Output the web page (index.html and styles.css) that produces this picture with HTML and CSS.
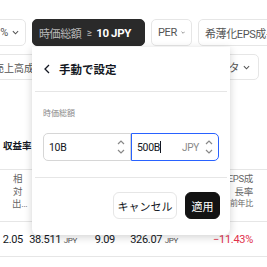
FILE: index.html
```html
<!DOCTYPE html>
<html lang="ja">
<head>
  <meta charset="UTF-8" />
  <meta name="viewport" content="width=device-width, initial-scale=1.0"/>
  <title>スクリーナー</title>
  <link rel="stylesheet" href="styles.css">
</head>
<body>
  <div class="page">
    <div class="filters">
      <div class="filter-row first">
        <div class="chip pct">% <svg class="chev" viewBox="0 0 8 5"><path d="M1 1l3 3 3-3"/></svg></div>
        <div class="chip active">
          <span class="chip-label">時価総額</span>
          <span class="ge">≥</span>
          <b>10 JPY</b>
          <svg class="chev up" viewBox="0 0 8 5"><path d="M1 4l3-3 3 3"/></svg>
        </div>
        <div class="chip per">PER <svg class="chev" viewBox="0 0 8 5"><path d="M1 1l3 3 3-3"/></svg></div>
        <div class="chip">希薄化EPS成長率</div>
      </div>
      <div class="filter-row second">
        <div class="chip sales">売上高成長率</div>
        <div class="chip beta">ベータ <svg class="chev" viewBox="0 0 8 5"><path d="M1 1l3 3 3-3"/></svg></div>
      </div>
    </div>

    <div class="section-title">収益率</div>

    <div class="table">
      <div class="row head">
        <div class="cell c1"><span class="vert">相対出…</span></div>
        <div class="cell c2"></div>
        <div class="cell c3"></div>
        <div class="cell c4"></div>
        <div class="cell c5"><span class="wrap">希薄化EPS成長率</span><small>前年比</small></div>
      </div>
      <div class="row">
        <div class="cell c1">2.05</div>
        <div class="cell c2">38.511 <span class="cur">JPY</span></div>
        <div class="cell c3">9.09</div>
        <div class="cell c4">326.07 <span class="cur">JPY</span></div>
        <div class="cell c5 neg">−11.43%</div>
      </div>
    </div>

    <div class="popover">
      <div class="pop-head">
        <svg class="back" viewBox="0 0 6 10"><path d="M5 1L1 5l4 4"/></svg>
        <span>手動で設定</span>
      </div>
      <div class="pop-body">
        <div class="field-label">時価総額</div>
        <div class="range">
          <div class="input">
            <span class="val">10B</span>
            <span class="spin"><svg viewBox="0 0 8 5"><path d="M1 4l3-3 3 3"/></svg><svg viewBox="0 0 8 5"><path d="M1 1l3 3 3-3"/></svg></span>
          </div>
          <div class="input focus">
            <span class="val">500B<i class="caret"></i></span>
            <span class="unit">JPY</span>
            <span class="spin"><svg viewBox="0 0 8 5"><path d="M1 4l3-3 3 3"/></svg><svg viewBox="0 0 8 5"><path d="M1 1l3 3 3-3"/></svg></span>
          </div>
        </div>
      </div>
      <div class="pop-foot">
        <button class="btn cancel">キャンセル</button>
        <button class="btn apply">適用</button>
      </div>
    </div>
  </div>
</body>
</html>
```

FILE: styles.css
```css
body {
  margin: 0;
  background: #fff;
  font-family: Roboto, "Noto Sans CJK JP", sans-serif;
  color: #131722;
}
.page {
  position: relative;
  width: 267px;
  height: 267px;
  overflow: hidden;
}
.filters {
  padding-top: 19px;
}
.filter-row {
  display: flex;
  gap: 6px;
  white-space: nowrap;
}
.filter-row.first { margin-left: -20px; }
.filter-row.second { margin-top: 8px; margin-left: -10px; gap: 0; }
.chip {
  display: flex;
  align-items: center;
  gap: 4px;
  height: 27px;
  box-sizing: border-box;
  padding: 0 6px;
  border: 1px solid #e6e6e6;
  border-radius: 5px;
  font-size: 11px;
  letter-spacing: -0.4px;
  color: #555;
  flex-shrink: 0;
}
.chip.pct { width: 46px; justify-content: flex-end; }
.chip.active {
  width: 113px;
  background: #2a2a2a;
  border-color: #2a2a2a;
  color: #fff;
  gap: 5px;
}
.chip-label { color: #b8b8b8; }
.ge { color: #b8b8b8; font-size: 10px; }
.chip.active b { font-weight: bold; font-size: 11.5px; }
.chip.per { width: 41px; }
.filter-row.second .chip { height: 26px; }
.chip.sales { width: 110px; padding-left: 3px; font-size: 10px; letter-spacing: 0; }
.chip.beta { margin-left: 99px; width: 60px; justify-content: flex-end; padding-right: 8px; }
.chev {
  width: 7px;
  height: 5px;
  fill: none;
  stroke: currentColor;
  stroke-width: 1.2;
}
.chev.up { stroke: #fff; margin-left: 3px; }

.section-title {
  margin-top: 58px;
  padding: 0 3px 14px;
  font-size: 9.5px;
  font-weight: bold;
  height: 17px;
}
.table { border-top: 1px solid #e6e6e6; }
.row {
  display: flex;
  border-bottom: 1px solid #e6e6e6;
  height: 34px;
  align-items: center;
  white-space: nowrap;
}
.row.head { height: 51px; align-items: flex-start; white-space: normal; }
.cell {
  box-sizing: border-box;
  text-align: right;
  padding-right: 2px;
  font-size: 11px;
  letter-spacing: -0.3px;
  flex-shrink: 0;
}
.c1 { width: 25px; }
.c2 { width: 54px; }
.c3 { width: 38px; }
.c4 { width: 63px; }
.c5 { width: 75px; }
.cur { font-size: 8px; color: #555; }
.neg { color: #e0314b; }
.head .cell { color: #666; font-size: 9.5px; line-height: 12.5px; padding-top: 3px; }
.vert {
  display: block;
  width: 11px;
  margin-left: 12px;
  text-align: center;
  word-break: break-all;
}
.head .c5 .wrap { display: block; margin-left: 15px; }
.head .c5 small { display: block; font-size: 8px; }

.popover {
  position: absolute;
  left: 32px;
  top: 47px;
  width: 198px;
  height: 188px;
  background: #fff;
  border-radius: 0 0 6px 6px;
  box-shadow: 0 2px 8px rgba(0,0,0,0.18);
  display: flex;
  flex-direction: column;
}
.pop-head {
  display: flex;
  align-items: center;
  gap: 9px;
  height: 44px;
  margin: 0 3px;
  padding-left: 9px;
  border-bottom: 1px solid #e6e6e6;
  font-size: 11.5px;
  font-weight: bold;
}
.back {
  width: 6px;
  height: 10px;
  fill: none;
  stroke: #131722;
  stroke-width: 1.3;
}
.pop-body {
  margin: 0 3px;
  padding: 15px 8px 16px;
  border-bottom: 1px solid #e6e6e6;
}
.field-label {
  font-size: 8px;
  color: #888;
  height: 12px;
  margin-bottom: 14px;
}
.range { display: flex; }
.input {
  flex: 1;
  display: flex;
  align-items: center;
  height: 28px;
  box-sizing: border-box;
  border: 1px solid #d6d6d6;
  border-radius: 5px 0 0 5px;
  padding: 0 5px;
  font-size: 10.5px;
  letter-spacing: -0.3px;
}
.input.focus {
  border: 1px solid #2962ff;
  border-radius: 0 5px 5px 0;
}
.val { flex: 1; }
.caret {
  display: inline-block;
  width: 1px;
  height: 12px;
  background: #131722;
  vertical-align: -2px;
}
.unit { color: #888; font-size: 10px; margin-right: 6px; }
.spin {
  display: flex;
  flex-direction: column;
  gap: 4px;
}
.spin svg {
  width: 8px;
  height: 5px;
  fill: none;
  stroke: #888;
  stroke-width: 1.2;
}
.pop-foot {
  display: flex;
  justify-content: flex-end;
  gap: 8px;
  padding: 14px 10px 0;
}
.btn {
  height: 27px;
  border-radius: 6px;
  font-family: inherit;
  font-size: 11px;
  padding: 0;
  white-space: nowrap;
  cursor: pointer;
}
.cancel { width: 64px; background: #fff; border: 1px solid #e6e6e6; color: #131722; }
.apply { width: 35px; background: #131313; border: 1px solid #131313; color: #fff; }
```
